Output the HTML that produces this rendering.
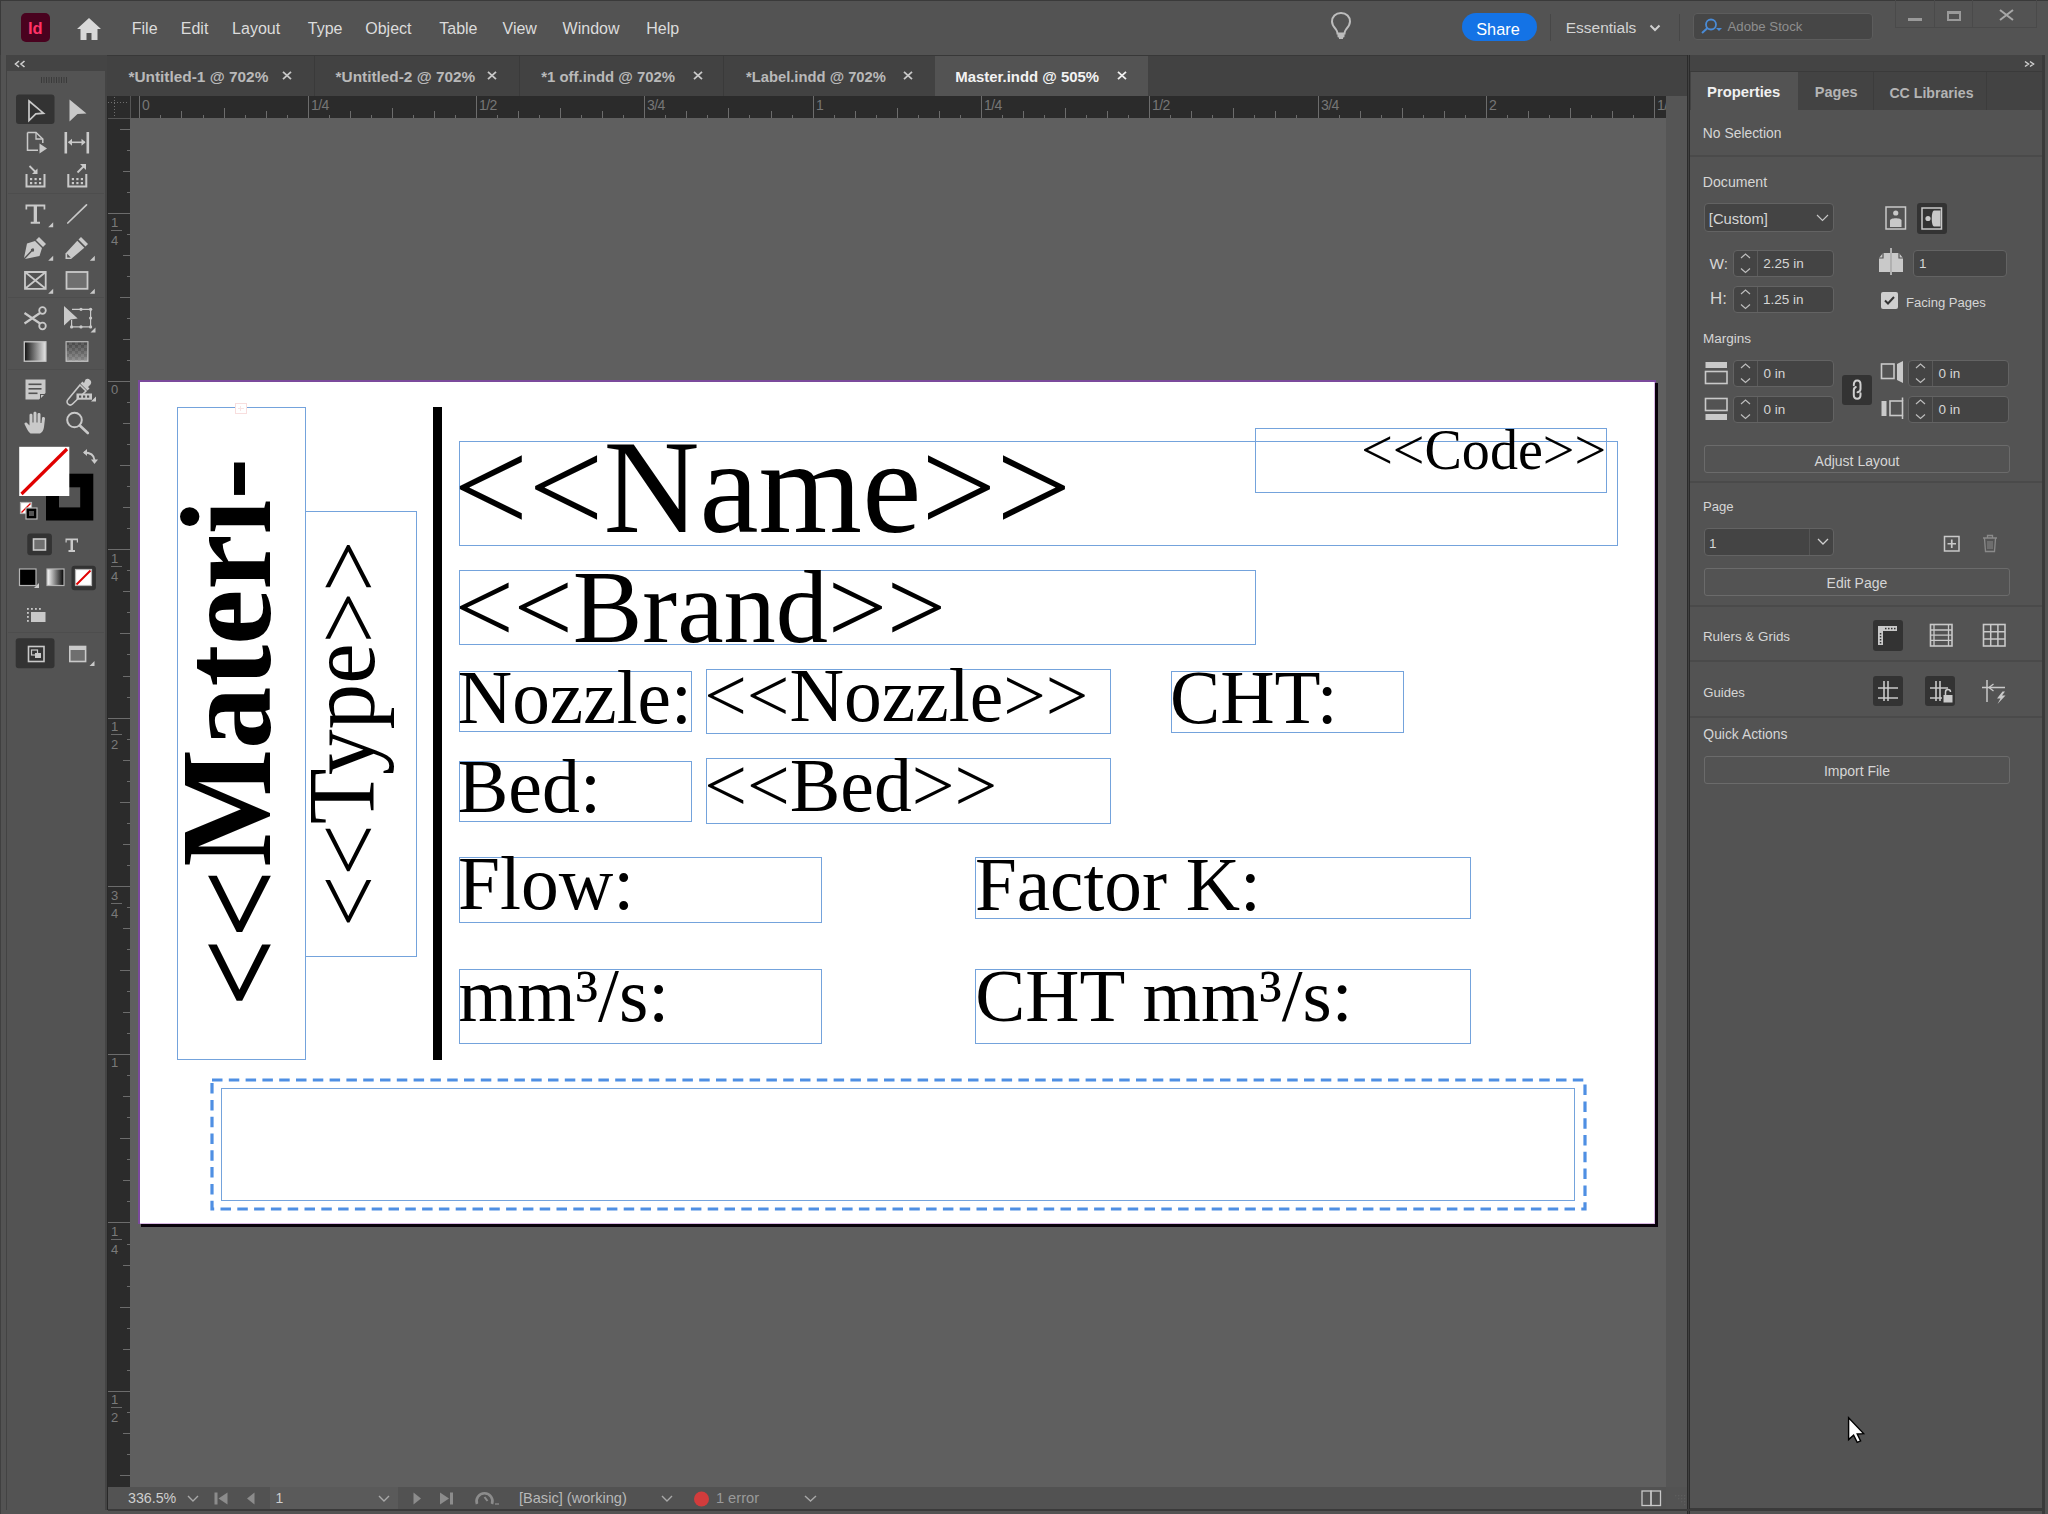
<!DOCTYPE html>
<html><head><meta charset="utf-8"><style>
*{margin:0;padding:0;box-sizing:border-box}
html,body{width:2048px;height:1514px;overflow:hidden}
body{background:#535353;position:relative;font-family:"Liberation Sans",sans-serif}
.a{position:absolute}
svg.a{overflow:visible}
</style></head><body>
<div class="a" style="left:0px;top:0px;width:2048px;height:1514px;background:#535353;"></div>
<div class="a" style="left:0px;top:0px;width:2048px;height:1px;background:#3a3a3a;"></div>
<div class="a" style="left:0px;top:0px;width:1px;height:1514px;background:#3a3a3a;"></div>
<div class="a" style="left:21px;top:13px;width:29px;height:29px;background:#49021f;border-radius:5px;"></div>
<div class="a" style="left:27.89px;top:20.03px;font-size:16.5px;line-height:16.5px;color:#ff3366;font-family:'Liberation Sans', sans-serif;white-space:pre;font-weight:700;">Id</div>
<svg class="a" style="left:76px;top:17px;" width="26" height="24" viewBox="0 0 26 24"><path d="M13 1 L25 12 L21.5 12 L21.5 23 L15.5 23 L15.5 16 L10.5 16 L10.5 23 L4.5 23 L4.5 12 L1 12 Z" fill="#d9d9d9"/></svg>
<div class="a" style="left:131.79px;top:20.76px;font-size:16px;line-height:16px;color:#dcdcdc;font-family:'Liberation Sans', sans-serif;white-space:pre;">File</div>
<div class="a" style="left:180.79px;top:20.76px;font-size:16px;line-height:16px;color:#dcdcdc;font-family:'Liberation Sans', sans-serif;white-space:pre;">Edit</div>
<div class="a" style="left:232.09px;top:20.76px;font-size:16px;line-height:16px;color:#dcdcdc;font-family:'Liberation Sans', sans-serif;white-space:pre;">Layout</div>
<div class="a" style="left:307.75px;top:20.76px;font-size:16px;line-height:16px;color:#dcdcdc;font-family:'Liberation Sans', sans-serif;white-space:pre;">Type</div>
<div class="a" style="left:365.25px;top:20.76px;font-size:16px;line-height:16px;color:#dcdcdc;font-family:'Liberation Sans', sans-serif;white-space:pre;">Object</div>
<div class="a" style="left:439.25px;top:20.76px;font-size:16px;line-height:16px;color:#dcdcdc;font-family:'Liberation Sans', sans-serif;white-space:pre;">Table</div>
<div class="a" style="left:502.52px;top:20.76px;font-size:16px;line-height:16px;color:#dcdcdc;font-family:'Liberation Sans', sans-serif;white-space:pre;">View</div>
<div class="a" style="left:562.62px;top:20.76px;font-size:16px;line-height:16px;color:#dcdcdc;font-family:'Liberation Sans', sans-serif;white-space:pre;">Window</div>
<div class="a" style="left:646.29px;top:20.76px;font-size:16px;line-height:16px;color:#dcdcdc;font-family:'Liberation Sans', sans-serif;white-space:pre;">Help</div>
<svg class="a" style="left:1328px;top:11px;" width="26" height="30" viewBox="0 0 26 30"><path d="M13 2 C7.5 2 4 6 4 10.5 C4 14 6 16 8 18.5 C9 19.8 9.5 21 9.5 22.5 L16.5 22.5 C16.5 21 17 19.8 18 18.5 C20 16 22 14 22 10.5 C22 6 18.5 2 13 2 Z" fill="none" stroke="#bdbdbd" stroke-width="2"/><rect x="9.5" y="22.5" width="7" height="4" rx="1" fill="#bdbdbd"/><rect x="11" y="26" width="4" height="2" fill="#bdbdbd"/></svg>
<div class="a" style="left:1462px;top:13px;width:75px;height:28px;background:#1473e6;border-radius:14px;"></div>
<div class="a" style="left:1476.25px;top:21.01px;font-size:16.29px;line-height:16.29px;color:#ffffff;font-family:'Liberation Sans', sans-serif;white-space:pre;">Share</div>
<div class="a" style="left:1550px;top:14px;width:1px;height:27px;background:#474747;"></div>
<div class="a" style="left:1565.73px;top:20.38px;font-size:15.5px;line-height:15.5px;color:#d4d4d4;font-family:'Liberation Sans', sans-serif;white-space:pre;">Essentials</div>
<svg class="a" style="left:1649px;top:24px;" width="12" height="8" viewBox="0 0 12 8"><path d="M1.5 1.5 L6 6 L10.5 1.5" fill="none" stroke="#cfcfcf" stroke-width="2"/></svg>
<div class="a" style="left:1679px;top:14px;width:1px;height:27px;background:#474747;"></div>
<div class="a" style="left:1693px;top:13px;width:180px;height:27px;background:#464646;border:1px solid #5c5c5c;border-radius:4px;"></div>
<svg class="a" style="left:1699px;top:18px;" width="24" height="16" viewBox="0 0 24 16"><circle cx="12" cy="6.5" r="5" fill="none" stroke="#4a8bd6" stroke-width="1.8"/><path d="M8.5 10 L3 15" stroke="#4a8bd6" stroke-width="2"/><path d="M17 10 L23 10 L20 13 Z" fill="#4a8bd6"/></svg>
<div class="a" style="left:1727.47px;top:20.40px;font-size:13.23px;line-height:13.23px;color:#8e8e8e;font-family:'Liberation Sans', sans-serif;white-space:pre;">Adobe Stock</div>
<div class="a" style="left:1895px;top:-1px;width:142px;height:29px;border:1px solid #4a4a4a;border-top:none;"></div>
<div class="a" style="left:1934px;top:0px;width:1px;height:28px;background:#4a4a4a;"></div>
<div class="a" style="left:1972px;top:0px;width:1px;height:28px;background:#4a4a4a;"></div>
<div class="a" style="left:1908px;top:18px;width:14px;height:3px;background:#9a9a9a;"></div>
<div class="a" style="left:1947px;top:11px;width:14px;height:10px;border:2px solid #9a9a9a;border-top-width:3px;"></div>
<svg class="a" style="left:1999px;top:9px;" width="15" height="12" viewBox="0 0 15 12"><path d="M1 1 L14 11 M14 1 L1 11" stroke="#a8a8a8" stroke-width="2"/></svg>
<div class="a" style="left:0px;top:55px;width:1px;height:1459px;background:#404040;"></div>
<div class="a" style="left:6px;top:55px;width:1px;height:1455px;background:#434343;"></div>
<div class="a" style="left:7px;top:55px;width:100px;height:16px;background:#444444;"></div>
<svg class="a" style="left:14px;top:60px;" width="12" height="8" viewBox="0 0 12 8"><path d="M5 1 L1.5 4 L5 7 M10.5 1 L7 4 L10.5 7" fill="none" stroke="#cfcfcf" stroke-width="1.6"/></svg>
<svg class="a" style="left:41px;top:77px;" width="28" height="6" viewBox="0 0 28 6"><rect x="0.0" y="0" width="1" height="6" fill="#3a3a3a"/><rect x="2.5" y="0" width="1" height="6" fill="#3a3a3a"/><rect x="5.0" y="0" width="1" height="6" fill="#3a3a3a"/><rect x="7.5" y="0" width="1" height="6" fill="#3a3a3a"/><rect x="10.0" y="0" width="1" height="6" fill="#3a3a3a"/><rect x="12.5" y="0" width="1" height="6" fill="#3a3a3a"/><rect x="15.0" y="0" width="1" height="6" fill="#3a3a3a"/><rect x="17.5" y="0" width="1" height="6" fill="#3a3a3a"/><rect x="20.0" y="0" width="1" height="6" fill="#3a3a3a"/><rect x="22.5" y="0" width="1" height="6" fill="#3a3a3a"/><rect x="25.0" y="0" width="1" height="6" fill="#3a3a3a"/></svg>
<div class="a" style="left:107px;top:55px;width:1580px;height:41px;background:#424242;"></div>
<div class="a" style="left:107px;top:55px;width:1580px;height:1px;background:#383838;"></div>
<div class="a" style="left:128.45px;top:69.46px;font-size:15.4px;line-height:15.4px;color:#b9b9b9;font-family:'Liberation Sans', sans-serif;white-space:pre;font-weight:700;">*Untitled-1 @ 702%</div>
<svg class="a" style="left:282px;top:71px;" width="10" height="9" viewBox="0 0 10 9"><path d="M1 0.8 L9 8.2 M9 0.8 L1 8.2" stroke="#c8c8c8" stroke-width="1.8"/></svg>
<div class="a" style="left:314px;top:56px;width:1px;height:40px;background:#3a3a3a;"></div>
<div class="a" style="left:335.55px;top:69.47px;font-size:15.39px;line-height:15.39px;color:#b9b9b9;font-family:'Liberation Sans', sans-serif;white-space:pre;font-weight:700;">*Untitled-2 @ 702%</div>
<svg class="a" style="left:487px;top:71px;" width="10" height="9" viewBox="0 0 10 9"><path d="M1 0.8 L9 8.2 M9 0.8 L1 8.2" stroke="#c8c8c8" stroke-width="1.8"/></svg>
<div class="a" style="left:519px;top:56px;width:1px;height:40px;background:#3a3a3a;"></div>
<div class="a" style="left:541.26px;top:69.87px;font-size:14.92px;line-height:14.92px;color:#b9b9b9;font-family:'Liberation Sans', sans-serif;white-space:pre;font-weight:700;">*1 off.indd @ 702%</div>
<svg class="a" style="left:693px;top:71px;" width="10" height="9" viewBox="0 0 10 9"><path d="M1 0.8 L9 8.2 M9 0.8 L1 8.2" stroke="#c8c8c8" stroke-width="1.8"/></svg>
<div class="a" style="left:723px;top:56px;width:1px;height:40px;background:#3a3a3a;"></div>
<div class="a" style="left:745.96px;top:70.00px;font-size:14.77px;line-height:14.77px;color:#b9b9b9;font-family:'Liberation Sans', sans-serif;white-space:pre;font-weight:700;">*Label.indd @ 702%</div>
<svg class="a" style="left:903px;top:71px;" width="10" height="9" viewBox="0 0 10 9"><path d="M1 0.8 L9 8.2 M9 0.8 L1 8.2" stroke="#c8c8c8" stroke-width="1.8"/></svg>
<div class="a" style="left:935px;top:56px;width:1px;height:40px;background:#3a3a3a;"></div>
<div class="a" style="left:935px;top:56px;width:213px;height:40px;background:#535353;"></div>
<div class="a" style="left:955.3px;top:69.87px;font-size:14.92px;line-height:14.92px;color:#f2f2f2;font-family:'Liberation Sans', sans-serif;white-space:pre;font-weight:700;">Master.indd @ 505%</div>
<svg class="a" style="left:1117px;top:71px;" width="10" height="9" viewBox="0 0 10 9"><path d="M1 0.8 L9 8.2 M9 0.8 L1 8.2" stroke="#f0f0f0" stroke-width="1.8"/></svg>
<div class="a" style="left:107px;top:96px;width:1px;height:1414px;background:#282828;"></div>
<div class="a" style="left:108px;top:96px;width:1579px;height:1391px;background:#5f5f5f;"></div>
<div class="a" style="left:1666px;top:96px;width:21px;height:1391px;background:#555555;"></div>
<div class="a" style="left:1687px;top:55px;width:3px;height:1459px;background:#404040;"></div>
<div class="a" style="left:1687px;top:55px;width:1px;height:1459px;background:#2b2b2b;"></div>
<div class="a" style="left:1689px;top:55px;width:1px;height:1459px;background:#2b2b2b;"></div>
<div class="a" style="left:108px;top:96px;width:1558px;height:22px;background:#2b2b2b;"></div>
<div class="a" style="left:108px;top:118px;width:22px;height:1369px;background:#2b2b2b;"></div>
<div class="a" style="left:108px;top:96px;width:22px;height:22px;background:#2b2b2b;"></div>
<div class="a" style="left:108px;top:1487px;width:1579px;height:22px;background:#535353;"></div>
<div class="a" style="left:108px;top:1509px;width:1582px;height:2px;background:#3a3a3a;"></div>
<svg class="a" style="left:0px;top:0px;" width="1700" height="120" viewBox="0 0 1700 120"><rect x="139" y="96" width="1" height="22" fill="#6c6c6c"/><rect x="160" y="115" width="1" height="3" fill="#6c6c6c"/><rect x="181" y="111" width="1" height="7" fill="#6c6c6c"/><rect x="203" y="115" width="1" height="3" fill="#6c6c6c"/><rect x="224" y="108" width="1" height="10" fill="#6c6c6c"/><rect x="245" y="115" width="1" height="3" fill="#6c6c6c"/><rect x="266" y="111" width="1" height="7" fill="#6c6c6c"/><rect x="287" y="115" width="1" height="3" fill="#6c6c6c"/><rect x="308" y="96" width="1" height="22" fill="#6c6c6c"/><rect x="329" y="115" width="1" height="3" fill="#6c6c6c"/><rect x="350" y="111" width="1" height="7" fill="#6c6c6c"/><rect x="371" y="115" width="1" height="3" fill="#6c6c6c"/><rect x="392" y="108" width="1" height="10" fill="#6c6c6c"/><rect x="413" y="115" width="1" height="3" fill="#6c6c6c"/><rect x="434" y="111" width="1" height="7" fill="#6c6c6c"/><rect x="455" y="115" width="1" height="3" fill="#6c6c6c"/><rect x="476" y="96" width="1" height="22" fill="#6c6c6c"/><rect x="497" y="115" width="1" height="3" fill="#6c6c6c"/><rect x="518" y="111" width="1" height="7" fill="#6c6c6c"/><rect x="539" y="115" width="1" height="3" fill="#6c6c6c"/><rect x="560" y="108" width="1" height="10" fill="#6c6c6c"/><rect x="581" y="115" width="1" height="3" fill="#6c6c6c"/><rect x="602" y="111" width="1" height="7" fill="#6c6c6c"/><rect x="623" y="115" width="1" height="3" fill="#6c6c6c"/><rect x="644" y="96" width="1" height="22" fill="#6c6c6c"/><rect x="665" y="115" width="1" height="3" fill="#6c6c6c"/><rect x="686" y="111" width="1" height="7" fill="#6c6c6c"/><rect x="707" y="115" width="1" height="3" fill="#6c6c6c"/><rect x="728" y="108" width="1" height="10" fill="#6c6c6c"/><rect x="749" y="115" width="1" height="3" fill="#6c6c6c"/><rect x="771" y="111" width="1" height="7" fill="#6c6c6c"/><rect x="792" y="115" width="1" height="3" fill="#6c6c6c"/><rect x="813" y="96" width="1" height="22" fill="#6c6c6c"/><rect x="834" y="115" width="1" height="3" fill="#6c6c6c"/><rect x="855" y="111" width="1" height="7" fill="#6c6c6c"/><rect x="876" y="115" width="1" height="3" fill="#6c6c6c"/><rect x="897" y="108" width="1" height="10" fill="#6c6c6c"/><rect x="918" y="115" width="1" height="3" fill="#6c6c6c"/><rect x="939" y="111" width="1" height="7" fill="#6c6c6c"/><rect x="960" y="115" width="1" height="3" fill="#6c6c6c"/><rect x="981" y="96" width="1" height="22" fill="#6c6c6c"/><rect x="1002" y="115" width="1" height="3" fill="#6c6c6c"/><rect x="1023" y="111" width="1" height="7" fill="#6c6c6c"/><rect x="1044" y="115" width="1" height="3" fill="#6c6c6c"/><rect x="1065" y="108" width="1" height="10" fill="#6c6c6c"/><rect x="1086" y="115" width="1" height="3" fill="#6c6c6c"/><rect x="1107" y="111" width="1" height="7" fill="#6c6c6c"/><rect x="1128" y="115" width="1" height="3" fill="#6c6c6c"/><rect x="1149" y="96" width="1" height="22" fill="#6c6c6c"/><rect x="1170" y="115" width="1" height="3" fill="#6c6c6c"/><rect x="1191" y="111" width="1" height="7" fill="#6c6c6c"/><rect x="1212" y="115" width="1" height="3" fill="#6c6c6c"/><rect x="1233" y="108" width="1" height="10" fill="#6c6c6c"/><rect x="1254" y="115" width="1" height="3" fill="#6c6c6c"/><rect x="1275" y="111" width="1" height="7" fill="#6c6c6c"/><rect x="1296" y="115" width="1" height="3" fill="#6c6c6c"/><rect x="1318" y="96" width="1" height="22" fill="#6c6c6c"/><rect x="1339" y="115" width="1" height="3" fill="#6c6c6c"/><rect x="1360" y="111" width="1" height="7" fill="#6c6c6c"/><rect x="1381" y="115" width="1" height="3" fill="#6c6c6c"/><rect x="1402" y="108" width="1" height="10" fill="#6c6c6c"/><rect x="1423" y="115" width="1" height="3" fill="#6c6c6c"/><rect x="1444" y="111" width="1" height="7" fill="#6c6c6c"/><rect x="1465" y="115" width="1" height="3" fill="#6c6c6c"/><rect x="1486" y="96" width="1" height="22" fill="#6c6c6c"/><rect x="1507" y="115" width="1" height="3" fill="#6c6c6c"/><rect x="1528" y="111" width="1" height="7" fill="#6c6c6c"/><rect x="1549" y="115" width="1" height="3" fill="#6c6c6c"/><rect x="1570" y="108" width="1" height="10" fill="#6c6c6c"/><rect x="1591" y="115" width="1" height="3" fill="#6c6c6c"/><rect x="1612" y="111" width="1" height="7" fill="#6c6c6c"/><rect x="1633" y="115" width="1" height="3" fill="#6c6c6c"/><rect x="1654" y="96" width="1" height="22" fill="#6c6c6c"/></svg>
<div class="a" style="left:0;top:0;width:1666px;height:120px;overflow:hidden;">
<div class="a" style="left:142px;top:98.15px;font-size:14px;line-height:14px;color:#767676;font-family:'Liberation Sans', sans-serif;white-space:pre;letter-spacing:-0.6px;">0</div>
<div class="a" style="left:311px;top:98.15px;font-size:14px;line-height:14px;color:#767676;font-family:'Liberation Sans', sans-serif;white-space:pre;letter-spacing:-0.6px;">1/4</div>
<div class="a" style="left:479px;top:98.15px;font-size:14px;line-height:14px;color:#767676;font-family:'Liberation Sans', sans-serif;white-space:pre;letter-spacing:-0.6px;">1/2</div>
<div class="a" style="left:647px;top:98.15px;font-size:14px;line-height:14px;color:#767676;font-family:'Liberation Sans', sans-serif;white-space:pre;letter-spacing:-0.6px;">3/4</div>
<div class="a" style="left:816px;top:98.15px;font-size:14px;line-height:14px;color:#767676;font-family:'Liberation Sans', sans-serif;white-space:pre;letter-spacing:-0.6px;">1</div>
<div class="a" style="left:984px;top:98.15px;font-size:14px;line-height:14px;color:#767676;font-family:'Liberation Sans', sans-serif;white-space:pre;letter-spacing:-0.6px;">1/4</div>
<div class="a" style="left:1152px;top:98.15px;font-size:14px;line-height:14px;color:#767676;font-family:'Liberation Sans', sans-serif;white-space:pre;letter-spacing:-0.6px;">1/2</div>
<div class="a" style="left:1321px;top:98.15px;font-size:14px;line-height:14px;color:#767676;font-family:'Liberation Sans', sans-serif;white-space:pre;letter-spacing:-0.6px;">3/4</div>
<div class="a" style="left:1489px;top:98.15px;font-size:14px;line-height:14px;color:#767676;font-family:'Liberation Sans', sans-serif;white-space:pre;letter-spacing:-0.6px;">2</div>
<div class="a" style="left:1657px;top:98.15px;font-size:14px;line-height:14px;color:#767676;font-family:'Liberation Sans', sans-serif;white-space:pre;letter-spacing:-0.6px;">1/4</div>
</div>
<svg class="a" style="left:0px;top:0px;" width="140" height="120" viewBox="0 0 140 120"><rect x="108" y="102" width="1" height="1" fill="#6e6e6e"/><rect x="111" y="102" width="1" height="1" fill="#6e6e6e"/><rect x="114" y="102" width="1" height="1" fill="#6e6e6e"/><rect x="117" y="102" width="1" height="1" fill="#6e6e6e"/><rect x="120" y="102" width="1" height="1" fill="#6e6e6e"/><rect x="123" y="102" width="1" height="1" fill="#6e6e6e"/><rect x="126" y="102" width="1" height="1" fill="#6e6e6e"/><rect x="114" y="97" width="1" height="1" fill="#6e6e6e"/><rect x="114" y="100" width="1" height="1" fill="#6e6e6e"/><rect x="114" y="103" width="1" height="1" fill="#6e6e6e"/><rect x="114" y="106" width="1" height="1" fill="#6e6e6e"/><rect x="114" y="109" width="1" height="1" fill="#6e6e6e"/><rect x="114" y="112" width="1" height="1" fill="#6e6e6e"/><rect x="114" y="115" width="1" height="1" fill="#6e6e6e"/></svg>
<div class="a" style="left:130px;top:96px;width:1px;height:22px;background:#555555;"></div>
<div class="a" style="left:108px;top:118px;width:22px;height:1px;background:#555555;"></div>
<svg class="a" style="left:0px;top:0px;" width="140" height="1500" viewBox="0 0 140 1500"><rect x="120" y="129" width="10" height="1" fill="#6c6c6c"/><rect x="127" y="150" width="3" height="1" fill="#6c6c6c"/><rect x="123" y="171" width="7" height="1" fill="#6c6c6c"/><rect x="127" y="192" width="3" height="1" fill="#6c6c6c"/><rect x="108" y="213" width="22" height="1" fill="#6c6c6c"/><rect x="127" y="234" width="3" height="1" fill="#6c6c6c"/><rect x="123" y="255" width="7" height="1" fill="#6c6c6c"/><rect x="127" y="276" width="3" height="1" fill="#6c6c6c"/><rect x="120" y="297" width="10" height="1" fill="#6c6c6c"/><rect x="127" y="318" width="3" height="1" fill="#6c6c6c"/><rect x="123" y="339" width="7" height="1" fill="#6c6c6c"/><rect x="127" y="360" width="3" height="1" fill="#6c6c6c"/><rect x="108" y="381" width="22" height="1" fill="#6c6c6c"/><rect x="127" y="402" width="3" height="1" fill="#6c6c6c"/><rect x="123" y="423" width="7" height="1" fill="#6c6c6c"/><rect x="127" y="444" width="3" height="1" fill="#6c6c6c"/><rect x="120" y="465" width="10" height="1" fill="#6c6c6c"/><rect x="127" y="486" width="3" height="1" fill="#6c6c6c"/><rect x="123" y="507" width="7" height="1" fill="#6c6c6c"/><rect x="127" y="528" width="3" height="1" fill="#6c6c6c"/><rect x="108" y="549" width="22" height="1" fill="#6c6c6c"/><rect x="127" y="570" width="3" height="1" fill="#6c6c6c"/><rect x="123" y="591" width="7" height="1" fill="#6c6c6c"/><rect x="127" y="612" width="3" height="1" fill="#6c6c6c"/><rect x="120" y="633" width="10" height="1" fill="#6c6c6c"/><rect x="127" y="654" width="3" height="1" fill="#6c6c6c"/><rect x="123" y="676" width="7" height="1" fill="#6c6c6c"/><rect x="127" y="697" width="3" height="1" fill="#6c6c6c"/><rect x="108" y="718" width="22" height="1" fill="#6c6c6c"/><rect x="127" y="739" width="3" height="1" fill="#6c6c6c"/><rect x="123" y="760" width="7" height="1" fill="#6c6c6c"/><rect x="127" y="781" width="3" height="1" fill="#6c6c6c"/><rect x="120" y="802" width="10" height="1" fill="#6c6c6c"/><rect x="127" y="823" width="3" height="1" fill="#6c6c6c"/><rect x="123" y="844" width="7" height="1" fill="#6c6c6c"/><rect x="127" y="865" width="3" height="1" fill="#6c6c6c"/><rect x="108" y="886" width="22" height="1" fill="#6c6c6c"/><rect x="127" y="907" width="3" height="1" fill="#6c6c6c"/><rect x="123" y="928" width="7" height="1" fill="#6c6c6c"/><rect x="127" y="949" width="3" height="1" fill="#6c6c6c"/><rect x="120" y="970" width="10" height="1" fill="#6c6c6c"/><rect x="127" y="991" width="3" height="1" fill="#6c6c6c"/><rect x="123" y="1012" width="7" height="1" fill="#6c6c6c"/><rect x="127" y="1033" width="3" height="1" fill="#6c6c6c"/><rect x="108" y="1054" width="22" height="1" fill="#6c6c6c"/><rect x="127" y="1075" width="3" height="1" fill="#6c6c6c"/><rect x="123" y="1096" width="7" height="1" fill="#6c6c6c"/><rect x="127" y="1117" width="3" height="1" fill="#6c6c6c"/><rect x="120" y="1138" width="10" height="1" fill="#6c6c6c"/><rect x="127" y="1159" width="3" height="1" fill="#6c6c6c"/><rect x="123" y="1180" width="7" height="1" fill="#6c6c6c"/><rect x="127" y="1201" width="3" height="1" fill="#6c6c6c"/><rect x="108" y="1222" width="22" height="1" fill="#6c6c6c"/><rect x="127" y="1244" width="3" height="1" fill="#6c6c6c"/><rect x="123" y="1265" width="7" height="1" fill="#6c6c6c"/><rect x="127" y="1286" width="3" height="1" fill="#6c6c6c"/><rect x="120" y="1307" width="10" height="1" fill="#6c6c6c"/><rect x="127" y="1328" width="3" height="1" fill="#6c6c6c"/><rect x="123" y="1349" width="7" height="1" fill="#6c6c6c"/><rect x="127" y="1370" width="3" height="1" fill="#6c6c6c"/><rect x="108" y="1391" width="22" height="1" fill="#6c6c6c"/><rect x="127" y="1412" width="3" height="1" fill="#6c6c6c"/><rect x="123" y="1433" width="7" height="1" fill="#6c6c6c"/><rect x="127" y="1454" width="3" height="1" fill="#6c6c6c"/><rect x="120" y="1475" width="10" height="1" fill="#6c6c6c"/></svg>
<div class="a" style="left:111px;top:215.80px;font-size:13px;line-height:13px;color:#7a7a7a;font-family:'Liberation Sans', sans-serif;white-space:pre;">1</div>
<div class="a" style="left:111px;top:230px;width:11px;height:1px;background:#6a6a6a;"></div>
<div class="a" style="left:111px;top:233.80px;font-size:13px;line-height:13px;color:#7a7a7a;font-family:'Liberation Sans', sans-serif;white-space:pre;">4</div>
<div class="a" style="left:111px;top:383.00px;font-size:13px;line-height:13px;color:#7a7a7a;font-family:'Liberation Sans', sans-serif;white-space:pre;">0</div>
<div class="a" style="left:111px;top:552.20px;font-size:13px;line-height:13px;color:#7a7a7a;font-family:'Liberation Sans', sans-serif;white-space:pre;">1</div>
<div class="a" style="left:111px;top:566px;width:11px;height:1px;background:#6a6a6a;"></div>
<div class="a" style="left:111px;top:570.20px;font-size:13px;line-height:13px;color:#7a7a7a;font-family:'Liberation Sans', sans-serif;white-space:pre;">4</div>
<div class="a" style="left:111px;top:720.40px;font-size:13px;line-height:13px;color:#7a7a7a;font-family:'Liberation Sans', sans-serif;white-space:pre;">1</div>
<div class="a" style="left:111px;top:734px;width:11px;height:1px;background:#6a6a6a;"></div>
<div class="a" style="left:111px;top:738.40px;font-size:13px;line-height:13px;color:#7a7a7a;font-family:'Liberation Sans', sans-serif;white-space:pre;">2</div>
<div class="a" style="left:111px;top:888.60px;font-size:13px;line-height:13px;color:#7a7a7a;font-family:'Liberation Sans', sans-serif;white-space:pre;">3</div>
<div class="a" style="left:111px;top:903px;width:11px;height:1px;background:#6a6a6a;"></div>
<div class="a" style="left:111px;top:906.60px;font-size:13px;line-height:13px;color:#7a7a7a;font-family:'Liberation Sans', sans-serif;white-space:pre;">4</div>
<div class="a" style="left:111px;top:1055.80px;font-size:13px;line-height:13px;color:#7a7a7a;font-family:'Liberation Sans', sans-serif;white-space:pre;">1</div>
<div class="a" style="left:111px;top:1225.00px;font-size:13px;line-height:13px;color:#7a7a7a;font-family:'Liberation Sans', sans-serif;white-space:pre;">1</div>
<div class="a" style="left:111px;top:1239px;width:11px;height:1px;background:#6a6a6a;"></div>
<div class="a" style="left:111px;top:1243.00px;font-size:13px;line-height:13px;color:#7a7a7a;font-family:'Liberation Sans', sans-serif;white-space:pre;">4</div>
<div class="a" style="left:111px;top:1393.20px;font-size:13px;line-height:13px;color:#7a7a7a;font-family:'Liberation Sans', sans-serif;white-space:pre;">1</div>
<div class="a" style="left:111px;top:1407px;width:11px;height:1px;background:#6a6a6a;"></div>
<div class="a" style="left:111px;top:1411.20px;font-size:13px;line-height:13px;color:#7a7a7a;font-family:'Liberation Sans', sans-serif;white-space:pre;">2</div>
<div class="a" style="left:138px;top:380px;width:1518px;height:844px;background:#7b4a9c;"></div>
<div class="a" style="left:140px;top:382px;width:1515px;height:842px;background:#ffffff;"></div>
<div class="a" style="left:1654px;top:382px;width:1px;height:842px;background:#d9b8e4;"></div>
<div class="a" style="left:140px;top:1223px;width:1515px;height:1px;background:#d9b8e4;"></div>
<div class="a" style="left:1655px;top:383px;width:3px;height:844px;background:#0a020c;"></div>
<div class="a" style="left:141px;top:1224px;width:1517px;height:3px;background:#0a020c;"></div>
<div class="a" style="left:177px;top:407px;width:129px;height:653px;border:1px solid #74a3dc;"></div>
<div class="a" style="left:305px;top:511px;width:112px;height:446px;border:1px solid #74a3dc;"></div>
<div class="a" style="left:433px;top:407px;width:9px;height:653px;background:#000000;"></div>
<div class="a" style="left:459px;top:441px;width:1159px;height:105px;border:1px solid #74a3dc;"></div>
<div class="a" style="left:1255px;top:428px;width:352px;height:65px;border:1px solid #74a3dc;"></div>
<div class="a" style="left:459px;top:570px;width:797px;height:75px;border:1px solid #74a3dc;"></div>
<div class="a" style="left:459px;top:671px;width:233px;height:61px;border:1px solid #74a3dc;"></div>
<div class="a" style="left:706px;top:669px;width:405px;height:65px;border:1px solid #74a3dc;"></div>
<div class="a" style="left:1171px;top:671px;width:233px;height:62px;border:1px solid #74a3dc;"></div>
<div class="a" style="left:459px;top:761px;width:233px;height:61px;border:1px solid #74a3dc;"></div>
<div class="a" style="left:706px;top:758px;width:405px;height:66px;border:1px solid #74a3dc;"></div>
<div class="a" style="left:459px;top:857px;width:363px;height:66px;border:1px solid #74a3dc;"></div>
<div class="a" style="left:975px;top:857px;width:496px;height:62px;border:1px solid #74a3dc;"></div>
<div class="a" style="left:459px;top:969px;width:363px;height:75px;border:1px solid #74a3dc;"></div>
<div class="a" style="left:975px;top:969px;width:496px;height:75px;border:1px solid #74a3dc;"></div>
<svg class="a" style="left:0;top:0" width="1700" height="1240"><rect x="212" y="1080" width="1373" height="129" fill="none" stroke="#4f8fe3" stroke-width="3.2" stroke-dasharray="10.5 6.3"/></svg>
<div class="a" style="left:221px;top:1088px;width:1354px;height:113px;border:1px solid #74a3dc;"></div>
<div class="a" style="left:235px;top:403px;width:12px;height:11px;border:1px solid #f8dede;background:#fff;"></div>
<div class="a" style="left:240px;top:406px;width:1px;height:5px;background:#f8e4e4;"></div>
<div class="a" style="left:238px;top:408px;width:6px;height:1px;background:#f8e4e4;"></div>
<div class="a" style="left:453.35px;top:421.35px;font-size:133.08px;line-height:133.08px;color:#000000;font-family:'Liberation Serif', serif;white-space:pre;">&lt;&lt;Name&gt;&gt;</div>
<div class="a" style="left:454.77px;top:554.86px;font-size:104.52px;line-height:104.52px;color:#000000;font-family:'Liberation Serif', serif;white-space:pre;">&lt;&lt;Brand&gt;&gt;</div>
<div class="a" style="left:1361.2px;top:422.03px;font-size:56.08px;line-height:56.08px;color:#000000;font-family:'Liberation Serif', serif;white-space:pre;">&lt;&lt;Code&gt;&gt;</div>
<div class="a" style="left:457.82px;top:659.94px;font-size:75.3px;line-height:75.3px;color:#000000;font-family:'Liberation Serif', serif;white-space:pre;">Nozzle:</div>
<div class="a" style="left:704.22px;top:658.17px;font-size:75.5px;line-height:75.5px;color:#000000;font-family:'Liberation Serif', serif;white-space:pre;">&lt;&lt;Nozzle&gt;&gt;</div>
<div class="a" style="left:1169.91px;top:660.04px;font-size:75.3px;line-height:75.3px;color:#000000;font-family:'Liberation Serif', serif;white-space:pre;">CHT:</div>
<div class="a" style="left:457.8px;top:749.22px;font-size:75.8px;line-height:75.8px;color:#000000;font-family:'Liberation Serif', serif;white-space:pre;">Bed:</div>
<div class="a" style="left:704.21px;top:747.52px;font-size:75.8px;line-height:75.8px;color:#000000;font-family:'Liberation Serif', serif;white-space:pre;">&lt;&lt;Bed&gt;&gt;</div>
<div class="a" style="left:458.01px;top:846.47px;font-size:75.5px;line-height:75.5px;color:#000000;font-family:'Liberation Serif', serif;white-space:pre;">Flow:</div>
<div class="a" style="left:974.92px;top:846.62px;font-size:75.2px;line-height:75.2px;color:#000000;font-family:'Liberation Serif', serif;white-space:pre;">Factor K:</div>
<div class="a" style="left:458.42px;top:957.64px;font-size:75.3px;line-height:75.3px;color:#000000;font-family:'Liberation Serif', serif;white-space:pre;">mm³/s:</div>
<div class="a" style="left:975.22px;top:958.49px;font-size:75.0px;line-height:75.0px;color:#000000;font-family:'Liberation Serif', serif;white-space:pre;">CHT mm³/s:</div>
<div class="a" style="left:270.8px;top:1008.84px;transform-origin:0 0;transform:rotate(-90deg) scale(1,1.04);"><div class="a" style="left:0;top:-104.52px;font-family:'Liberation Serif',serif;font-weight:700;font-size:124.8px;line-height:124.8px;white-space:pre;color:#000;"><span style="display:inline-block;transform:translateY(12px) scale(0.97)">&lt;&lt;</span>Materi-</div></div>
<div class="a" style="left:373.5px;top:926.55px;transform-origin:0 0;transform:rotate(-90deg) scale(1,1.04);"><div class="a" style="left:0;top:-76.30px;font-family:'Liberation Serif',serif;font-size:91.1px;line-height:91.1px;white-space:pre;color:#000;"><span style="display:inline-block;transform:translateY(6px) scale(1.0)">&lt;&lt;</span>Type<span style="display:inline-block;transform:translateY(6px) scale(1.0)">&gt;&gt;</span></div></div>
<div class="a" style="left:105px;top:71px;width:2px;height:1439px;background:#444444;"></div>
<svg class="a" style="left:0px;top:0px;" width="110" height="680" viewBox="0 0 110 680"><rect x="16" y="94.5" width="38.5" height="29.5" fill="#333333" rx="3"/><path d="M29 101 L43.5 113.2 L35.8 113.8 L29 120.5 Z" fill="none" stroke="#c9c9c9" stroke-width="1.7" stroke-linejoin="miter"/><path d="M69.5 99.5 L86.5 113.5 L77.5 114 L69.5 121.5 Z" fill="#c9c9c9" stroke="none" stroke-width="0" /><path d="M27.5 132.5 L36 132.5 L42.8 139 L42.8 143 M27.5 132.5 L27.5 150.3 L38 150.3" fill="none" stroke="#c9c9c9" stroke-width="1.5" /><path d="M36 132.5 L36 139 L42.8 139" fill="none" stroke="#c9c9c9" stroke-width="1.3" /><path d="M39.5 143.5 L47 148.5 L39.5 153.5 Z" fill="#c9c9c9" stroke="none" stroke-width="0" /><rect x="64.5" y="132" width="2.6" height="21.5" fill="#c9c9c9" /><rect x="86.5" y="132" width="2.6" height="21.5" fill="#c9c9c9" /><path d="M68.5 142.3 L85 142.3" fill="none" stroke="#c9c9c9" stroke-width="1.6" /><path d="M68 142.3 L72 138.8 L72 145.8 Z" fill="#c9c9c9" stroke="none" stroke-width="0" /><path d="M85.5 142.3 L81.5 138.8 L81.5 145.8 Z" fill="#c9c9c9" stroke="none" stroke-width="0" /><path d="M26.5 174 L26.5 186.5 L44.5 186.5 L44.5 174" fill="none" stroke="#c9c9c9" stroke-width="2" /><rect x="30.0" y="178" width="2.2" height="2.2" fill="#c9c9c9" /><rect x="34.5" y="178" width="2.2" height="2.2" fill="#c9c9c9" /><rect x="39.0" y="178" width="2.2" height="2.2" fill="#c9c9c9" /><rect x="30.0" y="182" width="2.2" height="2.2" fill="#c9c9c9" /><rect x="34.5" y="182" width="2.2" height="2.2" fill="#c9c9c9" /><rect x="39.0" y="182" width="2.2" height="2.2" fill="#c9c9c9" /><path d="M68.3 174 L68.3 186.5 L86.3 186.5 L86.3 174" fill="none" stroke="#c9c9c9" stroke-width="2" /><rect x="71.8" y="178" width="2.2" height="2.2" fill="#c9c9c9" /><rect x="76.3" y="178" width="2.2" height="2.2" fill="#c9c9c9" /><rect x="80.8" y="178" width="2.2" height="2.2" fill="#c9c9c9" /><rect x="71.8" y="182" width="2.2" height="2.2" fill="#c9c9c9" /><rect x="76.3" y="182" width="2.2" height="2.2" fill="#c9c9c9" /><rect x="80.8" y="182" width="2.2" height="2.2" fill="#c9c9c9" /><path d="M29.5 166 L36 172.5" fill="none" stroke="#c9c9c9" stroke-width="1.8" /><path d="M37.5 174 L37.5 168.5 L32 174 Z" fill="#c9c9c9" stroke="none" stroke-width="0" /><path d="M77.5 172.5 L84.5 165.5" fill="none" stroke="#c9c9c9" stroke-width="1.8" /><path d="M86 164 L86 170 L80 164 Z" fill="#c9c9c9" stroke="none" stroke-width="0" /><path d="M25.5 204.5 L45.3 204.5 L45.3 209.5 L43.6 209.5 L43.6 206.5 L37 206.5 L37 221.8 L40 221.8 L40 223.8 L30.7 223.8 L30.7 221.8 L33.7 221.8 L33.7 206.5 L27.2 206.5 L27.2 209.5 L25.5 209.5 Z" fill="#c9c9c9" stroke="none" stroke-width="0" /><path d="M53.2 222.2 L53.2 227.2 L48.2 227.2 Z" fill="#c9c9c9" stroke="none" stroke-width="0" /><path d="M67.8 223 L86.5 204.8" fill="none" stroke="#c9c9c9" stroke-width="1.7" stroke-linecap="round"/><path d="M39 237 L46 244 L43 247 L36 240 Z" fill="#c9c9c9" stroke="none" stroke-width="0" /><path d="M35 241 L42 248 L39.5 256 L25 259 L32 251.5 A1.6 1.6 0 1 0 31 250.5 L24 258 L27 243.5 Z" fill="#c9c9c9" stroke="none" stroke-width="0" /><path d="M53.2 255.7 L53.2 260.7 L48.2 260.7 Z" fill="#c9c9c9" stroke="none" stroke-width="0" /><path d="M81 237 L88 244 L85.5 246.5 L78.5 239.5 Z" fill="#c9c9c9" stroke="none" stroke-width="0" /><path d="M77.3 240.8 L84.3 247.8 L71 259 L65.5 259 L65.5 253.5 Z" fill="#c9c9c9" stroke="none" stroke-width="0" /><path d="M67.2 253.8 L67.2 257.4 L70.8 257.4 Z" fill="#535353" stroke="none" stroke-width="0" /><path d="M94.8 255.7 L94.8 260.7 L89.8 260.7 Z" fill="#c9c9c9" stroke="none" stroke-width="0" /><path d="M25 272 L45.7 272 L45.7 288.8 L25 288.8 Z M25 272 L45.7 288.8 M45.7 272 L25 288.8" fill="none" stroke="#c9c9c9" stroke-width="1.8" /><path d="M53.2 288.8 L53.2 293.8 L48.2 293.8 Z" fill="#c9c9c9" stroke="none" stroke-width="0" /><rect x="66.5" y="272" width="21" height="16.8" fill="#6f6f6f" stroke="#c9c9c9" stroke-width="1.8"/><path d="M94.8 288.8 L94.8 293.8 L89.8 293.8 Z" fill="#c9c9c9" stroke="none" stroke-width="0" /><path d="M24.5 313 L40 323.5 M24.5 323.5 L40 313" fill="none" stroke="#c9c9c9" stroke-width="2.2" /><circle cx="42.5" cy="310.5" r="3.3" fill="none" stroke="#c9c9c9" stroke-width="1.8"/><circle cx="42.5" cy="326" r="3.3" fill="none" stroke="#c9c9c9" stroke-width="1.8"/><path d="M72 309.3 L90.6 309.3 L90.6 326.9 L71.6 326.9 L71.6 320" fill="none" stroke="#c9c9c9" stroke-width="1.2" /><circle cx="81" cy="309.3" r="1.6" fill="#c9c9c9"/><circle cx="90.6" cy="309.3" r="1.6" fill="#c9c9c9"/><circle cx="90.6" cy="318" r="1.6" fill="#c9c9c9"/><circle cx="90.6" cy="326.9" r="1.6" fill="#c9c9c9"/><circle cx="81" cy="326.9" r="1.6" fill="#c9c9c9"/><circle cx="71.6" cy="326.9" r="1.6" fill="#c9c9c9"/><path d="M64 306 L77.7 318.4 L70.5 319.5 L64 325.5 Z" fill="#c9c9c9" stroke="none" stroke-width="0" /><path d="M95.5 327.5 L95.5 332.5 L90.5 332.5 Z" fill="#c9c9c9" stroke="none" stroke-width="0" /><defs><linearGradient id="gs" x1="0" x2="1" y1="0" y2="0"><stop offset="0" stop-color="#111"/><stop offset="1" stop-color="#e8e8e8"/></linearGradient><pattern id="ck" width="6" height="6" patternUnits="userSpaceOnUse" x="66" y="342"><rect width="6" height="6" fill="#5e5e5e"/><rect width="3" height="3" fill="#3e3e3e"/><rect x="3" y="3" width="3" height="3" fill="#3e3e3e"/></pattern><linearGradient id="gf" x1="0" x2="0" y1="0" y2="1"><stop offset="0" stop-color="#555" stop-opacity="0.4"/><stop offset="1" stop-color="#bbb" stop-opacity="0.6"/></linearGradient></defs><rect x="24.3" y="341.8" width="21.6" height="19.4" fill="url(#gs)" stroke="#c9c9c9" stroke-width="1.3"/><rect x="66.2" y="341.8" width="21.6" height="19.4" fill="url(#ck)" stroke="#c9c9c9" stroke-width="1.3"/><rect x="66.2" y="341.8" width="21.6" height="19.4" fill="url(#gf)" /><path d="M25.5 379.5 L45.5 379.5 L45.5 393 L39 399.5 L25.5 399.5 Z" fill="#c9c9c9" stroke="none" stroke-width="0" /><rect x="28.5" y="383.5" width="13" height="1.6" fill="#535353" /><rect x="28.5" y="388" width="13" height="1.6" fill="#535353" /><rect x="28.5" y="392.5" width="9" height="1.6" fill="#535353" /><path d="M40 399.5 L40 394 L45.5 394" fill="#535353" stroke="none" stroke-width="0" /><path d="M41 398 L41 395 L44 395 Z" fill="#c9c9c9" stroke="none" stroke-width="0" /><path d="M85.5 379.5 A3.6 3.6 0 0 1 90.5 384.5 L88 387 L89.5 388.5 L87.5 390.5 L80.5 383.5 L82.5 381.5 L84 383 Z" fill="#c9c9c9" stroke="none" stroke-width="0" /><path d="M80 385 L86 391 L72.5 404 A3 3 0 0 1 68 399.5 Z" fill="none" stroke="#c9c9c9" stroke-width="1.6" /><rect x="76.5" y="393.5" width="15.5" height="6.2" fill="#c9c9c9" /><rect x="79" y="395.5" width="2.2" height="2.2" fill="#535353" /><rect x="83" y="395.5" width="2.2" height="2.2" fill="#535353" /><rect x="87" y="395.5" width="2.2" height="2.2" fill="#535353" /><path d="M96 396.5 L96 401.5 L91 401.5 Z" fill="#c9c9c9" stroke="none" stroke-width="0" /><g transform="translate(24,411)"><path d="M6.5 22.5 C4.5 21 3.5 19 2.5 17 L0.6 13.2 C0 12 1.6 10.8 2.8 11.8 L5.5 14.5 L5.5 4 C5.5 2.3 8.5 2.3 8.5 4 L8.5 11.5 L9.5 11.5 L9.5 2 C9.5 0.2 12.5 0.2 12.5 2 L12.5 11.5 L13.5 11.5 L13.5 3.2 C13.5 1.5 16.5 1.5 16.5 3.2 L16.5 12 L17.5 12 L18 7 C18.3 5.4 21.2 5.7 21 7.5 L20 16 C19.6 19.5 18 21.5 16 22.5 Z" fill="#c9c9c9"/></g><circle cx="74.5" cy="420" r="7.3" fill="none" stroke="#c9c9c9" stroke-width="2"/><path d="M79.8 425.5 L87.8 433" fill="none" stroke="#c9c9c9" stroke-width="2.6" stroke-linecap="round"/><rect x="46" y="473.7" width="47.3" height="46.8" fill="#000000" /><rect x="59" y="487.3" width="21.2" height="20.1" fill="#535353" /><rect x="19.2" y="446.8" width="50.1" height="49.2" fill="#ffffff" /><path d="M21.5 494 L67 449" fill="none" stroke="#e00000" stroke-width="3.2" /><path d="M84 452.5 C90 452.5 94 455 94.5 460" fill="none" stroke="#c9c9c9" stroke-width="1.8" /><path d="M83 452.5 L87 449 L87 456 Z" fill="#c9c9c9" stroke="none" stroke-width="0" /><path d="M94.5 464 L91 459.5 L98 459.5 Z" fill="#c9c9c9" stroke="none" stroke-width="0" /><rect x="20.5" y="502.5" width="11" height="11" fill="#ffffff" stroke="#b5b5b5" stroke-width="1.2"/><path d="M21.5 512.5 L30.5 503.5" fill="none" stroke="#e00000" stroke-width="1.3" /><rect x="26" y="508" width="11" height="11" fill="#000" stroke="#b5b5b5" stroke-width="1.2"/><rect x="29" y="511" width="5" height="5" fill="#535353" /><rect x="27.3" y="533.5" width="24.6" height="21.8" fill="#333333" rx="3"/><rect x="33.5" y="539" width="12" height="11" fill="#6f6f6f" stroke="#c9c9c9" stroke-width="1.6"/><path d="M65.5 538.5 L78 538.5 L78 542.5 L76.8 542.5 L76.8 540.3 L73 540.3 L73 550 L75 550 L75 552 L68.5 552 L68.5 550 L70.5 550 L70.5 540.3 L66.7 540.3 L66.7 542.5 L65.5 542.5 Z" fill="#c9c9c9" stroke="none" stroke-width="0" /><rect x="19.5" y="569" width="16.5" height="16.5" fill="#000" stroke="#b5b5b5" stroke-width="1.2"/><path d="M39 583 L39 588 L34 588 Z" fill="#c9c9c9" stroke="none" stroke-width="0" /><defs><linearGradient id="gs2" x1="0" x2="1"><stop offset="0" stop-color="#fff"/><stop offset="1" stop-color="#000"/></linearGradient></defs><rect x="47" y="569" width="17" height="16.5" fill="url(#gs2)" stroke="#b5b5b5" stroke-width="1.2"/><rect x="71.5" y="565.8" width="24.4" height="24.4" fill="#333333" rx="3"/><rect x="75.5" y="569.5" width="16" height="16" fill="#ffffff" stroke="#b5b5b5" stroke-width="1.2"/><path d="M76.5 584.5 L90.5 570.5" fill="none" stroke="#e00000" stroke-width="2" /><rect x="31" y="612" width="14.5" height="10" fill="#c9c9c9" /><rect x="27" y="608" width="1.8" height="1.8" fill="#c9c9c9" /><rect x="31" y="608" width="1.8" height="1.8" fill="#c9c9c9" /><rect x="35" y="608" width="1.8" height="1.8" fill="#c9c9c9" /><rect x="39" y="608" width="1.8" height="1.8" fill="#c9c9c9" /><rect x="27" y="612" width="1.8" height="1.8" fill="#c9c9c9" /><rect x="27" y="616" width="1.8" height="1.8" fill="#c9c9c9" /><rect x="27" y="620" width="1.8" height="1.8" fill="#c9c9c9" /><rect x="15.7" y="638.2" width="38.8" height="30.1" fill="#333333" rx="3"/><rect x="28.5" y="646.5" width="15.5" height="15" fill="none" stroke="#c9c9c9" stroke-width="1.6"/><rect x="31.5" y="650" width="6" height="5" fill="none" stroke="#c9c9c9" stroke-width="1.2"/><rect x="35" y="653" width="6" height="5" fill="#c9c9c9" /><rect x="69.8" y="646.5" width="15.8" height="15" fill="#6f6f6f" stroke="#c9c9c9" stroke-width="1.6"/><rect x="69.8" y="646.5" width="15.8" height="3.5" fill="#c9c9c9" /><path d="M94.5 661 L94.5 666 L89.5 666 Z" fill="#c9c9c9" stroke="none" stroke-width="0" /><rect x="8" y="193" width="96" height="1" fill="#4d4d4d" /><rect x="8" y="297" width="96" height="1" fill="#4d4d4d" /><rect x="8" y="369" width="96" height="1" fill="#4d4d4d" /><rect x="8" y="632" width="96" height="1" fill="#4d4d4d" /></svg>
<div class="a" style="left:1690px;top:55px;width:352px;height:1455px;background:#535353;"></div>
<div class="a" style="left:2042px;top:55px;width:3px;height:1459px;background:#3a3a3a;"></div>
<div class="a" style="left:2045px;top:55px;width:3px;height:1459px;background:#535353;"></div>
<div class="a" style="left:1690px;top:1508px;width:355px;height:3px;background:#3a3a3a;"></div>
<div class="a" style="left:1690px;top:55px;width:352px;height:17px;background:#444444;"></div>
<div class="a" style="left:1690px;top:71px;width:352px;height:1px;background:#3a3a3a;"></div>
<svg class="a" style="left:2024px;top:61px;" width="11" height="6" viewBox="0 0 11 6"><path d="M1 0.5 L4.5 3 L1 5.5 M6 0.5 L9.5 3 L6 5.5" fill="none" stroke="#cfcfcf" stroke-width="1.5"/></svg>
<div class="a" style="left:1690px;top:72px;width:352px;height:38px;background:#434343;"></div>
<div class="a" style="left:1691px;top:72px;width:107px;height:38px;background:#535353;"></div>
<div class="a" style="left:1873px;top:72px;width:1px;height:38px;background:#3c3c3c;"></div>
<div class="a" style="left:1986px;top:72px;width:1px;height:38px;background:#3c3c3c;"></div>
<div class="a" style="left:1707.01px;top:85.24px;font-size:14.84px;line-height:14.84px;color:#f0f0f0;font-family:'Liberation Sans', sans-serif;white-space:pre;font-weight:700;">Properties</div>
<div class="a" style="left:1814.73px;top:85.48px;font-size:14.55px;line-height:14.55px;color:#b4b4b4;font-family:'Liberation Sans', sans-serif;white-space:pre;font-weight:700;">Pages</div>
<div class="a" style="left:1889.42px;top:85.82px;font-size:14.15px;line-height:14.15px;color:#b4b4b4;font-family:'Liberation Sans', sans-serif;white-space:pre;font-weight:700;">CC Libraries</div>
<div class="a" style="left:1702.86px;top:127.36px;font-size:13.87px;line-height:13.87px;color:#d6d6d6;font-family:'Liberation Sans', sans-serif;white-space:pre;">No Selection</div>
<div class="a" style="left:1690px;top:155px;width:352px;height:2px;background:#4a4a4a;"></div>
<div class="a" style="left:1702.84px;top:175.06px;font-size:14.1px;line-height:14.1px;color:#d6d6d6;font-family:'Liberation Sans', sans-serif;white-space:pre;">Document</div>
<div class="a" style="left:1704px;top:203px;width:130px;height:29px;background:#444444;border:1px solid #636363;border-radius:4px;"></div>
<div class="a" style="left:1708.85px;top:212.30px;font-size:14.77px;line-height:14.77px;color:#d6d6d6;font-family:'Liberation Sans', sans-serif;white-space:pre;">[Custom]</div>
<svg class="a" style="left:1815.5px;top:214px;" width="13" height="7.5" viewBox="0 0 13 7.5"><path d="M1 1 L6.5 6.5 L12 1" fill="none" stroke="#c8c8c8" stroke-width="1.1"/></svg>
<svg class="a" style="left:1885px;top:206px;" width="22" height="24" viewBox="0 0 22 24"><rect x="1" y="1" width="19.5" height="22" fill="none" stroke="#c9c9c9" stroke-width="1.5"/><circle cx="10.75" cy="7" r="2.6" fill="#c9c9c9"/><path d="M5 21 L5 14.5 C5 11.5 16.5 11.5 16.5 14.5 L16.5 21 Z" fill="#c9c9c9"/></svg>
<div class="a" style="left:1917px;top:203px;width:30px;height:31px;background:#333;border-radius:3px;"></div>
<svg class="a" style="left:1921px;top:207px;" width="22" height="23" viewBox="0 0 22 23"><rect x="1" y="1" width="19.5" height="21" fill="none" stroke="#c9c9c9" stroke-width="1.5"/><circle cx="7" cy="11.5" r="2.6" fill="#c9c9c9"/><path d="M19.5 3.5 L13 3.5 C10 3.5 10 19.5 13 19.5 L19.5 19.5 Z" fill="#c9c9c9"/></svg>
<div class="a" style="left:1709.52px;top:255.61px;font-size:15.34px;line-height:15.34px;color:#d6d6d6;font-family:'Liberation Sans', sans-serif;white-space:pre;">W:</div>
<div class="a" style="left:1710.11px;top:290.67px;font-size:16.93px;line-height:16.93px;color:#d6d6d6;font-family:'Liberation Sans', sans-serif;white-space:pre;">H:</div>
<div class="a" style="left:1733px;top:250px;width:101px;height:27px;background:#444444;border:1px solid #636363;border-radius:4px;"></div>
<div class="a" style="left:1757px;top:251px;width:1px;height:25px;background:#5a5a5a;"></div>
<svg class="a" style="left:1739px;top:254px;" width="14" height="19" viewBox="0 0 14 19"><path d="M2 4.0 L6.5 0.0 L11 4.0 M2 14.5 L6.5 18.5 L11 14.5" fill="none" stroke="#bdbdbd" stroke-width="1.2"/></svg>
<div class="a" style="left:1763.32px;top:257.07px;font-size:13.5px;line-height:13.5px;color:#d6d6d6;font-family:'Liberation Sans', sans-serif;white-space:pre;">2.25 in</div>
<div class="a" style="left:1733px;top:286px;width:101px;height:27px;background:#444444;border:1px solid #636363;border-radius:4px;"></div>
<div class="a" style="left:1757px;top:287px;width:1px;height:25px;background:#5a5a5a;"></div>
<svg class="a" style="left:1739px;top:290px;" width="14" height="19" viewBox="0 0 14 19"><path d="M2 4.0 L6.5 0.0 L11 4.0 M2 14.5 L6.5 18.5 L11 14.5" fill="none" stroke="#bdbdbd" stroke-width="1.2"/></svg>
<div class="a" style="left:1762.97px;top:293.07px;font-size:13.5px;line-height:13.5px;color:#d6d6d6;font-family:'Liberation Sans', sans-serif;white-space:pre;">1.25 in</div>
<svg class="a" style="left:1878px;top:247px;" width="26" height="29" viewBox="0 0 26 29"><path d="M12 6 L5 6 L1 11 L1 25 L12 25 Z M14 6 L21 6 L25 11 L25 25 L14 25 Z" fill="#c9c9c9"/><path d="M13 1 L13 28" stroke="#c9c9c9" stroke-width="1.6"/><path d="M5 6 L5 11 L1 11 M21 6 L21 11 L25 11" fill="none" stroke="#535353" stroke-width="1.2"/></svg>
<div class="a" style="left:1913px;top:250px;width:94px;height:27px;background:#444444;border:1px solid #636363;border-radius:4px;"></div>
<div class="a" style="left:1918.97px;top:257.17px;font-size:13.5px;line-height:13.5px;color:#d6d6d6;font-family:'Liberation Sans', sans-serif;white-space:pre;">1</div>
<div class="a" style="left:1881px;top:292px;width:17px;height:17px;background:#cfcfcf;border-radius:2px;"></div>
<svg class="a" style="left:1883px;top:295px;" width="13" height="11" viewBox="0 0 13 11"><path d="M2 5.5 L5 8.5 L11 2" fill="none" stroke="#333" stroke-width="2"/></svg>
<div class="a" style="left:1905.93px;top:295.62px;font-size:13.09px;line-height:13.09px;color:#d6d6d6;font-family:'Liberation Sans', sans-serif;white-space:pre;">Facing Pages</div>
<div class="a" style="left:1702.89px;top:331.56px;font-size:13.52px;line-height:13.52px;color:#d6d6d6;font-family:'Liberation Sans', sans-serif;white-space:pre;">Margins</div>
<div class="a" style="left:1733px;top:360px;width:101px;height:27px;background:#444444;border:1px solid #636363;border-radius:4px;"></div>
<div class="a" style="left:1757px;top:361px;width:1px;height:25px;background:#5a5a5a;"></div>
<svg class="a" style="left:1739px;top:364px;" width="14" height="19" viewBox="0 0 14 19"><path d="M2 4.0 L6.5 0.0 L11 4.0 M2 14.5 L6.5 18.5 L11 14.5" fill="none" stroke="#bdbdbd" stroke-width="1.2"/></svg>
<div class="a" style="left:1763.47px;top:367.07px;font-size:13.5px;line-height:13.5px;color:#d6d6d6;font-family:'Liberation Sans', sans-serif;white-space:pre;">0 in</div>
<div class="a" style="left:1733px;top:396px;width:101px;height:27px;background:#444444;border:1px solid #636363;border-radius:4px;"></div>
<div class="a" style="left:1757px;top:397px;width:1px;height:25px;background:#5a5a5a;"></div>
<svg class="a" style="left:1739px;top:400px;" width="14" height="19" viewBox="0 0 14 19"><path d="M2 4.0 L6.5 0.0 L11 4.0 M2 14.5 L6.5 18.5 L11 14.5" fill="none" stroke="#bdbdbd" stroke-width="1.2"/></svg>
<div class="a" style="left:1763.47px;top:403.07px;font-size:13.5px;line-height:13.5px;color:#d6d6d6;font-family:'Liberation Sans', sans-serif;white-space:pre;">0 in</div>
<div class="a" style="left:1908px;top:360px;width:101px;height:27px;background:#444444;border:1px solid #636363;border-radius:4px;"></div>
<div class="a" style="left:1932px;top:361px;width:1px;height:25px;background:#5a5a5a;"></div>
<svg class="a" style="left:1914px;top:364px;" width="14" height="19" viewBox="0 0 14 19"><path d="M2 4.0 L6.5 0.0 L11 4.0 M2 14.5 L6.5 18.5 L11 14.5" fill="none" stroke="#bdbdbd" stroke-width="1.2"/></svg>
<div class="a" style="left:1938.47px;top:367.07px;font-size:13.5px;line-height:13.5px;color:#d6d6d6;font-family:'Liberation Sans', sans-serif;white-space:pre;">0 in</div>
<div class="a" style="left:1908px;top:396px;width:101px;height:27px;background:#444444;border:1px solid #636363;border-radius:4px;"></div>
<div class="a" style="left:1932px;top:397px;width:1px;height:25px;background:#5a5a5a;"></div>
<svg class="a" style="left:1914px;top:400px;" width="14" height="19" viewBox="0 0 14 19"><path d="M2 4.0 L6.5 0.0 L11 4.0 M2 14.5 L6.5 18.5 L11 14.5" fill="none" stroke="#bdbdbd" stroke-width="1.2"/></svg>
<div class="a" style="left:1938.47px;top:403.07px;font-size:13.5px;line-height:13.5px;color:#d6d6d6;font-family:'Liberation Sans', sans-serif;white-space:pre;">0 in</div>
<svg class="a" style="left:1704px;top:360px;" width="26" height="27" viewBox="0 0 26 27"><rect x="1.5" y="2" width="21.5" height="6" fill="#c9c9c9"/><rect x="1.5" y="11.5" width="21.5" height="12" fill="none" stroke="#c9c9c9" stroke-width="1.6"/></svg>
<svg class="a" style="left:1704px;top:397px;" width="26" height="27" viewBox="0 0 26 27"><rect x="1.5" y="1.5" width="21.5" height="12" fill="none" stroke="#c9c9c9" stroke-width="1.6"/><rect x="1.5" y="17" width="21.5" height="6" fill="#c9c9c9"/></svg>
<svg class="a" style="left:1880px;top:360px;" width="26" height="28" viewBox="0 0 26 28"><rect x="1.5" y="4" width="12.5" height="14.5" fill="none" stroke="#c9c9c9" stroke-width="1.6"/><path d="M17 4 L23 1 L23 23 L17 20 Z" fill="#c9c9c9"/></svg>
<svg class="a" style="left:1880px;top:396px;" width="26" height="28" viewBox="0 0 26 28"><rect x="10" y="5" width="12.5" height="14.5" fill="none" stroke="#c9c9c9" stroke-width="1.6"/><rect x="1.5" y="5" width="5" height="15" fill="#c9c9c9"/><path d="M22.5 5 L22.5 1.5 M22.5 19.5 L22.5 23" stroke="#c9c9c9" stroke-width="1.5"/></svg>
<div class="a" style="left:1842px;top:375px;width:30px;height:30px;background:#333;border-radius:3px;"></div>
<svg class="a" style="left:1846px;top:376px;" width="20" height="26" viewBox="0 0 20 26"><path d="M7.8 9.3 C7.8 5.5 10 4.5 11.2 4.5 C13 4.5 14.5 6 14.5 8.5 L14.5 13 C14.5 15 13 16 11.5 16.3" fill="none" stroke="#cfcfcf" stroke-width="2" stroke-linecap="round"/><path d="M9.8 11 C8.4 11.5 7.8 13 7.8 14.5 L7.8 19 C7.8 21.5 9.3 22.8 11.2 22.8 C13.2 22.8 14.5 21.3 14.5 19 L14.5 17.2" fill="none" stroke="#cfcfcf" stroke-width="2" stroke-linecap="round"/></svg>
<div class="a" style="left:1704px;top:445px;width:306px;height:28px;border:1px solid #6b6b6b;border-radius:3px;"></div>
<div class="a" style="left:1814.6px;top:453.95px;font-size:14px;line-height:14px;color:#d6d6d6;font-family:'Liberation Sans', sans-serif;white-space:pre;">Adjust Layout</div>
<div class="a" style="left:1690px;top:481px;width:352px;height:2px;background:#4a4a4a;"></div>
<div class="a" style="left:1702.92px;top:500.19px;font-size:13.13px;line-height:13.13px;color:#d6d6d6;font-family:'Liberation Sans', sans-serif;white-space:pre;">Page</div>
<div class="a" style="left:1704px;top:528px;width:130px;height:28px;background:#444444;border:1px solid #636363;border-radius:4px;"></div>
<div class="a" style="left:1809px;top:529px;width:1px;height:26px;background:#555555;"></div>
<div class="a" style="left:1708.97px;top:537.07px;font-size:13.5px;line-height:13.5px;color:#d6d6d6;font-family:'Liberation Sans', sans-serif;white-space:pre;">1</div>
<svg class="a" style="left:1816.5px;top:538px;" width="12" height="7" viewBox="0 0 12 7"><path d="M1 1 L6.0 6 L11 1" fill="none" stroke="#cfcfcf" stroke-width="1.3"/></svg>
<svg class="a" style="left:1943px;top:535px;" width="18" height="18" viewBox="0 0 18 18"><rect x="1.5" y="1.5" width="14.5" height="14.5" fill="none" stroke="#c9c9c9" stroke-width="1.5"/><path d="M8.75 4.5 L8.75 13 M4.5 8.75 L13 8.75" stroke="#c9c9c9" stroke-width="1.7"/></svg>
<svg class="a" style="left:1982px;top:534px;" width="16" height="19" viewBox="0 0 16 19"><path d="M1 4 L15 4 M5.5 4 L5.5 1.5 L10.5 1.5 L10.5 4 M2.5 4.5 L3.5 17.5 L12.5 17.5 L13.5 4.5" fill="none" stroke="#8a8a8a" stroke-width="1.3"/><path d="M6 7 L6 15 M8 7 L8 15 M10 7 L10 15" stroke="#8a8a8a" stroke-width="1"/></svg>
<div class="a" style="left:1704px;top:568px;width:306px;height:28px;border:1px solid #6b6b6b;border-radius:3px;"></div>
<div class="a" style="left:1826.6px;top:576.35px;font-size:14px;line-height:14px;color:#d6d6d6;font-family:'Liberation Sans', sans-serif;white-space:pre;">Edit Page</div>
<div class="a" style="left:1690px;top:605px;width:352px;height:2px;background:#4a4a4a;"></div>
<div class="a" style="left:1702.9px;top:630.24px;font-size:13.42px;line-height:13.42px;color:#d6d6d6;font-family:'Liberation Sans', sans-serif;white-space:pre;">Rulers &amp; Grids</div>
<div class="a" style="left:1873px;top:620px;width:30px;height:31px;background:#333;border-radius:3px;"></div>
<svg class="a" style="left:1876px;top:624px;" width="24" height="24" viewBox="0 0 24 24"><path d="M2 2 L21 2 L21 7 L7 7 L7 21 L2 21 Z" fill="#c9c9c9"/><rect x="9" y="3.8" width="1.5" height="1.5" fill="#333"/><rect x="12" y="3.8" width="1.5" height="1.5" fill="#333"/><rect x="15" y="3.8" width="1.5" height="1.5" fill="#333"/><rect x="18" y="3.8" width="1.5" height="1.5" fill="#333"/><rect x="3.8" y="9" width="1.5" height="1.5" fill="#333"/><rect x="3.8" y="12" width="1.5" height="1.5" fill="#333"/><rect x="3.8" y="15" width="1.5" height="1.5" fill="#333"/><rect x="3.8" y="18" width="1.5" height="1.5" fill="#333"/></svg>
<svg class="a" style="left:1929px;top:623px;" width="25" height="25" viewBox="0 0 25 25"><rect x="1.5" y="1.5" width="21.5" height="21.5" fill="none" stroke="#c9c9c9" stroke-width="1.6"/><path d="M1.5 7 L23 7 M1.5 12.2 L23 12.2 M1.5 17.4 L23 17.4 M5 1.5 L5 23 M19.5 1.5 L19.5 23" stroke="#c9c9c9" stroke-width="1.3"/></svg>
<svg class="a" style="left:1982px;top:623px;" width="25" height="25" viewBox="0 0 25 25"><rect x="1.5" y="1.5" width="21.5" height="21.5" fill="none" stroke="#c9c9c9" stroke-width="1.6"/><path d="M1.5 8.7 L23 8.7 M1.5 15.9 L23 15.9 M8.7 1.5 L8.7 23 M15.9 1.5 L15.9 23" stroke="#c9c9c9" stroke-width="1.5"/></svg>
<div class="a" style="left:1690px;top:660px;width:352px;height:2px;background:#4a4a4a;"></div>
<div class="a" style="left:1703.34px;top:685.88px;font-size:13.14px;line-height:13.14px;color:#d6d6d6;font-family:'Liberation Sans', sans-serif;white-space:pre;">Guides</div>
<div class="a" style="left:1873px;top:676px;width:30px;height:30px;background:#333;border-radius:3px;"></div>
<svg class="a" style="left:1876px;top:679px;" width="24" height="24" viewBox="0 0 24 24"><path d="M8 2 L8 22 M12 2 L12 22 M2 9 L22 9 M2 19 L22 19" stroke="#c9c9c9" stroke-width="1.6"/></svg>
<div class="a" style="left:1925px;top:676px;width:30px;height:30px;background:#333;border-radius:3px;"></div>
<svg class="a" style="left:1928px;top:679px;" width="26" height="26" viewBox="0 0 26 26"><path d="M8 2 L8 22 M12 2 L12 22 M2 9 L20 9 M2 19 L14 19" stroke="#c9c9c9" stroke-width="1.6"/><rect x="15.5" y="16" width="9" height="7.5" fill="#c9c9c9"/><path d="M17.5 16 L17.5 13 A2.5 2.5 0 0 1 22.5 13" fill="none" stroke="#c9c9c9" stroke-width="1.5"/></svg>
<svg class="a" style="left:1981px;top:679px;" width="27" height="26" viewBox="0 0 27 26"><path d="M6 1 L6 23 M1 8.5 L24 8.5" stroke="#c9c9c9" stroke-width="1.5"/><path d="M12.5 5 L8 8.5 L12.5 12" fill="none" stroke="#c9c9c9" stroke-width="1.3"/><path d="M21.5 12.5 L16 19.5 L19.5 19.5 L16.5 25 L24.5 16.5 L21 16.5 L24 12.5 Z" fill="#c9c9c9"/></svg>
<div class="a" style="left:1690px;top:716px;width:352px;height:2px;background:#4a4a4a;"></div>
<div class="a" style="left:1703.35px;top:728.14px;font-size:13.89px;line-height:13.89px;color:#d6d6d6;font-family:'Liberation Sans', sans-serif;white-space:pre;">Quick Actions</div>
<div class="a" style="left:1704px;top:756px;width:306px;height:28px;border:1px solid #6b6b6b;border-radius:3px;"></div>
<div class="a" style="left:1823.9px;top:763.85px;font-size:14px;line-height:14px;color:#d6d6d6;font-family:'Liberation Sans', sans-serif;white-space:pre;">Import File</div>
<div class="a" style="left:130px;top:1487px;width:140px;height:22px;background:#525252;"></div>
<div class="a" style="left:270px;top:1487px;width:128px;height:22px;background:#5a5a5a;"></div>
<div class="a" style="left:398px;top:1487px;width:1268px;height:22px;background:#525252;"></div>
<div class="a" style="left:127.96px;top:1490.53px;font-size:14.26px;line-height:14.26px;color:#cfcfcf;font-family:'Liberation Sans', sans-serif;white-space:pre;">336.5%</div>
<svg class="a" style="left:186.5px;top:1495px;" width="12" height="7" viewBox="0 0 12 7"><path d="M1 1 L6.0 6 L11 1" fill="none" stroke="#a8a8a8" stroke-width="1.4"/></svg>
<svg class="a" style="left:214px;top:1491px;" width="15" height="15" viewBox="0 0 15 15"><rect x="0.5" y="1.5" width="3" height="12" fill="#8c8c8c"/><path d="M13.5 1.5 L4.5 7.5 L13.5 13.5 Z" fill="#8c8c8c"/></svg>
<svg class="a" style="left:246px;top:1491px;" width="10" height="15" viewBox="0 0 10 15"><path d="M8.5 1.5 L1 7.5 L8.5 13.5 Z" fill="#8c8c8c"/></svg>
<div class="a" style="left:275.44px;top:1490.75px;font-size:14px;line-height:14px;color:#cfcfcf;font-family:'Liberation Sans', sans-serif;white-space:pre;">1</div>
<svg class="a" style="left:377.5px;top:1495px;" width="12" height="7" viewBox="0 0 12 7"><path d="M1 1 L6.0 6 L11 1" fill="none" stroke="#a8a8a8" stroke-width="1.4"/></svg>
<svg class="a" style="left:412px;top:1491px;" width="10" height="15" viewBox="0 0 10 15"><path d="M1.5 1.5 L9 7.5 L1.5 13.5 Z" fill="#8c8c8c"/></svg>
<svg class="a" style="left:439px;top:1491px;" width="15" height="15" viewBox="0 0 15 15"><path d="M1 1.5 L10 7.5 L1 13.5 Z" fill="#8c8c8c"/><rect x="11" y="1.5" width="3" height="12" fill="#8c8c8c"/></svg>
<svg class="a" style="left:474px;top:1489px;" width="26" height="18" viewBox="0 0 26 18"><path d="M3 15 A8 8 0 1 1 18 15" fill="none" stroke="#8c8c8c" stroke-width="2.6"/><path d="M10.5 8 L13.5 12" stroke="#8c8c8c" stroke-width="2"/><path d="M21 15 L25 15" stroke="#8c8c8c" stroke-width="1.3"/></svg>
<div class="a" style="left:518.96px;top:1490.64px;font-size:14.6px;line-height:14.6px;color:#b8b8b8;font-family:'Liberation Sans', sans-serif;white-space:pre;">[Basic] (working)</div>
<svg class="a" style="left:661px;top:1495px;" width="12" height="7" viewBox="0 0 12 7"><path d="M1 1 L6.0 6 L11 1" fill="none" stroke="#a8a8a8" stroke-width="1.4"/></svg>
<svg class="a" style="left:693px;top:1490px;" width="18" height="18" viewBox="0 0 18 18"><circle cx="8.5" cy="9" r="7.5" fill="#d23c3c"/></svg>
<div class="a" style="left:715.89px;top:1490.59px;font-size:14.66px;line-height:14.66px;color:#9a9a9a;font-family:'Liberation Sans', sans-serif;white-space:pre;">1 error</div>
<svg class="a" style="left:804px;top:1495px;" width="13" height="7" viewBox="0 0 13 7"><path d="M1 1 L6.5 6 L12 1" fill="none" stroke="#a8a8a8" stroke-width="1.4"/></svg>
<svg class="a" style="left:1641px;top:1490px;" width="22" height="17" viewBox="0 0 22 17"><rect x="1" y="1" width="9" height="14.5" fill="none" stroke="#c8c8c8" stroke-width="1.3"/><rect x="10" y="1" width="9.5" height="14.5" fill="none" stroke="#c8c8c8" stroke-width="1.3"/></svg>
<svg class="a" style="left:1670px;top:1490px;" width="16" height="17" viewBox="0 0 16 17"><rect x="14" y="14" width="1.3" height="1.3" fill="#5d5d5d"/><rect x="14" y="11" width="1.3" height="1.3" fill="#5d5d5d"/><rect x="11" y="11" width="1.3" height="1.3" fill="#5d5d5d"/><rect x="14" y="8" width="1.3" height="1.3" fill="#5d5d5d"/><rect x="11" y="8" width="1.3" height="1.3" fill="#5d5d5d"/><rect x="8" y="8" width="1.3" height="1.3" fill="#5d5d5d"/><rect x="14" y="5" width="1.3" height="1.3" fill="#5d5d5d"/><rect x="11" y="5" width="1.3" height="1.3" fill="#5d5d5d"/><rect x="8" y="5" width="1.3" height="1.3" fill="#5d5d5d"/><rect x="5" y="5" width="1.3" height="1.3" fill="#5d5d5d"/></svg>
<svg class="a" style="left:1846px;top:1415px;" width="22" height="32" viewBox="0 0 22 32"><path d="M2.6 2.8 L2.6 24.6 L7.6 20.2 L11.2 27.4 L14.6 26 L11.2 19 L17.6 18.6 Z" fill="#ffffff" stroke="#000000" stroke-width="1.4" stroke-linejoin="miter"/></svg>
</body></html>
